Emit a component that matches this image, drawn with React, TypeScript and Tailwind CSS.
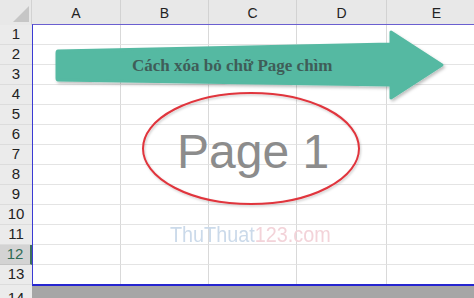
import React from "react";

// độ rộng các cột A–E
const columns = [
  { name: "A", width: "w-[89px]" },
  { name: "B", width: "w-[88px]" },
  { name: "C", width: "w-[88px]" },
  { name: "D", width: "w-[90px]" },
  { name: "E", width: "w-[100px]" },
];

const rows = Array.from({ length: 13 }, (_, i) => i + 1);

function Overlay() {
  return (
    <svg
      className="absolute left-0 top-0 pointer-events-none"
      width={474}
      height={298}
      viewBox="0 0 474 298"
    >
      <defs>
        <filter id="shadow" x="-10%" y="-20%" width="120%" height="150%">
          <feDropShadow dx="1.5" dy="2" stdDeviation="1.5" floodColor="#000" floodOpacity="0.25" />
        </filter>
        <filter id="shadow2" x="-10%" y="-20%" width="120%" height="150%">
          <feDropShadow dx="1" dy="1.5" stdDeviation="1" floodColor="#000" floodOpacity="0.2" />
        </filter>
      </defs>
      {/* mũi tên */}
      <path
        d="M58 51 L391 44 L391 32 L442 65 L391 98 L391 85 L58 80 Q57 80 57 78 L57 53 Q57 51 58 51 Z"
        fill="#55b9a2"
        stroke="#55b9a2"
        strokeWidth={3}
        strokeLinejoin="round"
        filter="url(#shadow)"
      />
      {/* hình elip */}
      <ellipse
        cx={251}
        cy={148.5}
        rx={108}
        ry={55.5}
        fill="none"
        stroke="#e0353d"
        strokeWidth={2}
        filter="url(#shadow2)"
      />
    </svg>
  );
}

export default function App() {
  return (
    <div
      className="relative w-[474px] h-[298px] overflow-hidden bg-white text-[#222]"
      style={{ fontFamily: "'Liberation Sans', Arial, sans-serif" }}
    >
      {/* hàng tiêu đề cột */}
      <div className="flex h-[25px] bg-[#e8e8e8]">
        <div className="relative w-[32px] shrink-0 border-r border-[#d2d2d2]">
          <div className="absolute right-[2px] bottom-[3px] w-0 h-0 border-l-[16px] border-l-transparent border-b-[16px] border-b-[#c6c6c6]" />
        </div>
        {columns.map((c) => (
          <div
            key={c.name}
            className={`${c.width} shrink-0 flex items-center justify-center border-r border-[#d2d2d2] text-[14px] pt-[2px]`}
          >
            {c.name}
          </div>
        ))}
      </div>

      {/* các hàng */}
      {rows.map((r) => (
        <div key={r} className="flex h-[20px]">
          <div
            className={`w-[32px] shrink-0 flex items-center justify-center text-[15px] border-b ${
              r === 12
                ? "bg-[#d3d3d3] text-[#2f6b55] border-[#c4c4c4] border-r-2 border-r-[#3f6f5c]"
                : "bg-[#ebebeb] border-[#dcdcdc]"
            }`}
          >
            {r}
          </div>
          {columns.map((c) => (
            <div
              key={c.name}
              className={`${c.width} shrink-0 border-r border-r-[#d9d9d9] border-b border-b-[#e4e4e4]`}
            />
          ))}
        </div>
      ))}

      {/* hàng 14 */}
      <div className="flex h-[20px]">
        <div className="w-[32px] shrink-0 flex items-center justify-center text-[15px] bg-[#ebebeb] pt-[6px]">
          14
        </div>
        <div className="flex-1 bg-[#a6a6a6]" />
      </div>

      {/* đường viền vùng in */}
      <div className="absolute left-[32px] top-[24px] w-[460px] h-[262px] border-t border-t-[#6a5fd0] border-l border-l-[#3b3bd4] border-b-2 border-b-[#2626d0]" />

      <Overlay />

      {/* chữ trên mũi tên */}
      <div
        className="absolute left-[132px] top-[57px] text-[17px] leading-none font-bold text-[#3f5d58] whitespace-nowrap"
        style={{ fontFamily: "'Liberation Serif', 'Times New Roman', serif" }}
      >
        Cách xóa bỏ chữ Page chìm
      </div>

      {/* Page 1 */}
      <div className="absolute left-[177px] top-[128px] text-[48px] leading-none text-[#8c8c8c] whitespace-nowrap">
        Page 1
      </div>

      {/* watermark */}
      <div className="absolute left-[170px] top-[224px] text-[22px] leading-none whitespace-nowrap origin-left scale-x-90">
        <span className="text-[#cbdaea]">ThuThuat</span>
        <span className="text-[#f3d3d9]">123.com</span>
      </div>
    </div>
  );
}
